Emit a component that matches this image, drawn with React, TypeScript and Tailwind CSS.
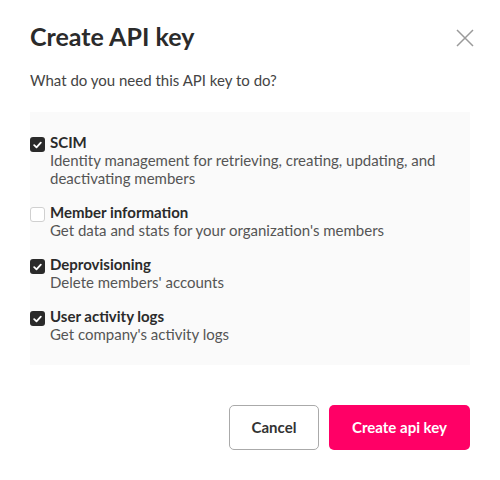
import { useState } from "react";

const permissions = [
  {
    id: "scim",
    title: "SCIM",
    desc: "Identity management for retrieving, creating, updating, and deactivating members",
    checked: true,
  },
  {
    id: "member",
    title: "Member information",
    desc: "Get data and stats for your organization's members",
    checked: false,
  },
  {
    id: "deprov",
    title: "Deprovisioning",
    desc: "Delete members' accounts",
    checked: true,
  },
  {
    id: "activity",
    title: "User activity logs",
    desc: "Get company's activity logs",
    checked: true,
  },
];

const Checkbox = ({ checked, onClick }: { checked: boolean; onClick: () => void }) => (
  <button
    onClick={onClick}
    className={`mt-[4px] w-[15px] h-[15px] shrink-0 rounded-[3px] flex items-center justify-center ${
      checked ? "bg-[#2a2a2a]" : "bg-white border border-[#d0d0d0]"
    }`}
  >
    {checked && (
      <svg width="9" height="8" viewBox="0 0 9 8" fill="none">
        <path d="M1.2 4.2 L3.5 6.3 L7.8 1.6" stroke="white" strokeWidth="1.8" strokeLinecap="round" strokeLinejoin="round" />
      </svg>
    )}
  </button>
);

const App = () => {
  const [checks, setChecks] = useState(permissions.map((p) => p.checked));

  const toggle = (i: number) => {
    setChecks(checks.map((c, j) => (j === i ? !c : c)));
  };

  return (
    <div className="w-[500px] h-[480px] bg-white px-[30px] pt-[21px] font-['Lato',sans-serif] text-[#333]">
      <div className="flex items-start justify-between">
        <h1 className="text-[25px] leading-[30px] font-bold text-[#2b2b2b]">Create API key</h1>
        <button className="mt-[8px] -mr-[4px] text-[#9a9a9a]">
          <svg width="18" height="18" viewBox="0 0 18 18" fill="none">
            <path d="M1 1 L17 17 M17 1 L1 17" stroke="currentColor" strokeWidth="1.5" />
          </svg>
        </button>
      </div>

      <p className="mt-[20px] text-[15px] leading-[18px] text-[#444]">What do you need this API key to do?</p>

      <div className="mt-[23px] bg-[#fafafa] pt-[21px] pb-[22px] flex flex-col gap-[16px]">
        {permissions.map((p, i) => (
          <div key={p.id} className="flex gap-[5px]">
            <Checkbox checked={checks[i]} onClick={() => toggle(i)} />
            <div className="text-[15px] leading-[18px]">
              <div className="font-bold text-[#2b2b2b]">{p.title}</div>
              <div className="text-[#555] pr-[20px]">{p.desc}</div>
            </div>
          </div>
        ))}
      </div>

      <div className="mt-[40px] flex justify-end gap-[10px]">
        <button className="w-[90px] h-[45px] rounded-[5px] border border-[#aaa] bg-white text-[15px] font-bold text-[#333]">
          Cancel
        </button>
        <button className="w-[141px] h-[45px] rounded-[5px] bg-[#ff0066] text-[15px] font-bold text-white">
          Create api key
        </button>
      </div>
    </div>
  );
};

export default App;
